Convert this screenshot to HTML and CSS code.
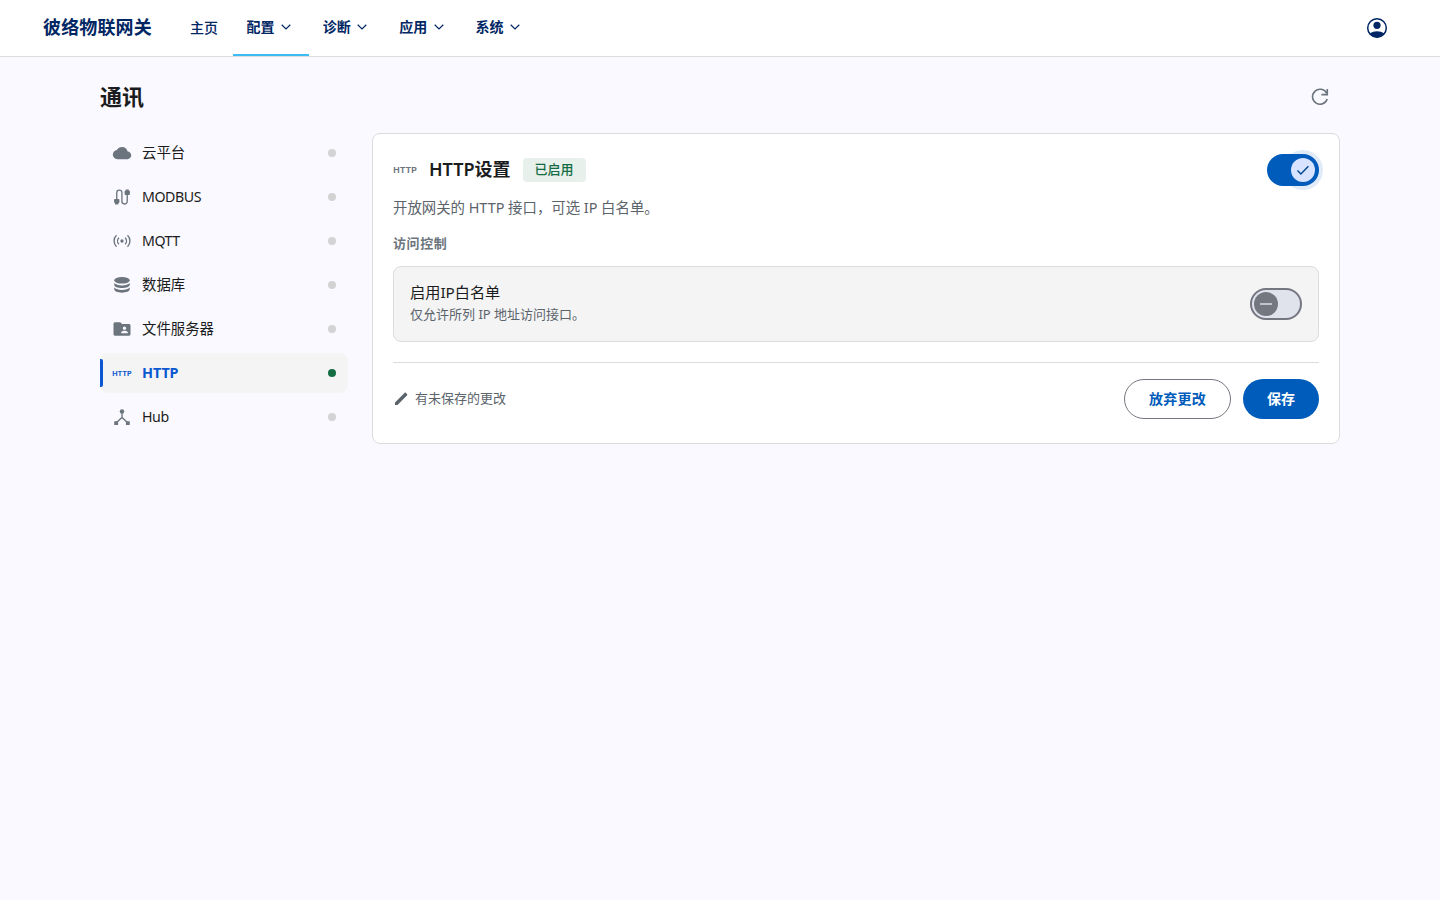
FILE: index.html
```html
<!DOCTYPE html>
<html lang="zh-CN">
<head>
    <meta charset="UTF-8">
    <meta name="viewport" content="width=device-width, initial-scale=1.0">
    <title>彼络物联网关</title>
    <link rel="stylesheet" href="styles.css">
</head>
<body>
    <header class="topbar">
        <a class="brand">彼络物联网关</a>
        <nav class="nav">
            <a class="nav-item home">主页</a>
            <a class="nav-item active">配置<svg class="chevron" viewBox="0 0 16 16"><path d="M3.700 5.700L8 9.900 12.300 5.700"/></svg></a>
            <a class="nav-item">诊断<svg class="chevron" viewBox="0 0 16 16"><path d="M3.700 5.700L8 9.900 12.300 5.700"/></svg></a>
            <a class="nav-item">应用<svg class="chevron" viewBox="0 0 16 16"><path d="M3.700 5.700L8 9.900 12.300 5.700"/></svg></a>
            <a class="nav-item">系统<svg class="chevron" viewBox="0 0 16 16"><path d="M3.700 5.700L8 9.900 12.300 5.700"/></svg></a>
        </nav>
        <button class="icon-btn account" aria-label="账户">
            <svg viewBox="0 0 24 24">
                <circle cx="12" cy="12" r="9.300" fill="none" stroke="currentColor" stroke-width="1.500"/>
                <circle cx="12" cy="9.300" r="3.600"/>
                <path d="M4.800 17.600C7 15.900 9.400 15.200 12 15.200s5 .7 7.200 2.400C17.500 20.200 15 21.500 12 21.500S6.500 20.200 4.800 17.600z"/>
            </svg>
        </button>
    </header>

    <main class="page">
        <div class="page-head">
            <h1>通讯</h1>
            <button class="icon-btn refresh" aria-label="刷新">
                <svg viewBox="0 0 24 24"><path d="M18.600 8.100A7.500 7.500 0 1 0 19.200 14M19.300 4v5.600h-5.900" fill="none" stroke="currentColor" stroke-width="1.600"/></svg>
            </button>
        </div>

        <div class="layout">
            <aside class="side">
                <a class="side-item">
                    <svg class="icon" viewBox="0 0 24 24"><path d="M19.350 10.040C18.670 6.590 15.640 4 12 4 9.110 4 6.600 5.640 5.350 8.040 2.340 8.360 0 10.910 0 14c0 3.310 2.690 6 6 6h13c2.760 0 5-2.240 5-5 0-2.640-2.050-4.780-4.650-4.960z" transform="translate(1 1) scale(.92)"/></svg>
                    <span>云平台</span><i class="dot"></i>
                </a>
                <a class="side-item latin">
                    <svg class="icon" viewBox="0 0 24 24">
                        <path d="M5.700 15V6.800a3.100 3.100 0 0 1 6.200 0v10.400a3.200 3.200 0 0 0 6.400 0V9" fill="none" stroke="currentColor" stroke-width="1.600"/>
                        <path d="M3.500 14.500h4.400a1 1 0 0 1 1 1v2.800L7.500 20.200V21H3.900v-.8l-1.400-1.900v-2.800a1 1 0 0 1 1-1zM16.500 3h3.600v.8l1.400 1.400v3.300a1 1 0 0 1-1 1h-4.400a1 1 0 0 1-1-1V5.200l1.400-1.400z"/>
                    </svg>
                    <span>MODBUS</span><i class="dot"></i>
                </a>
                <a class="side-item latin">
                    <svg class="icon" viewBox="0 0 24 24">
                        <circle cx="12" cy="12" r="2"/>
                        <path d="M8.300 16a5.700 5.700 0 0 1 0-8M15.700 8a5.700 5.700 0 0 1 0 8M5.400 18.800a9.400 9.400 0 0 1 0-13.600M18.600 5.200a9.400 9.400 0 0 1 0 13.600" fill="none" stroke="currentColor" stroke-width="1.650"/>
                    </svg>
                    <span>MQTT</span><i class="dot"></i>
                </a>
                <a class="side-item">
                    <svg class="icon" viewBox="0 0 24 24">
                        <ellipse cx="12" cy="6.400" rx="9.300" ry="3.900"/>
                        <path d="M2.700 9.600c1.600 1.900 5 2.900 9.300 2.900s7.700-1 9.300-2.900v2c0 2.300-4.200 4-9.300 4s-9.300-1.700-9.300-4zM2.700 15c1.600 1.900 5 2.900 9.300 2.900s7.700-1 9.300-2.900v2.200c0 2.300-4.200 4-9.300 4s-9.300-1.700-9.300-4z"/>
                    </svg>
                    <span>数据库</span><i class="dot"></i>
                </a>
                <a class="side-item">
                    <svg class="icon" viewBox="0 0 24 24"><path d="M20.500 6H12l-2-2H3.500C2.600 4 1.800 4.900 1.800 5.800V18.300c0 .9.800 1.700 1.700 1.700h17c.9 0 1.700-.8 1.700-1.700V7.700c0-.9-.8-1.700-1.700-1.700zM15 9c1.100 0 2 .9 2 2s-.9 2-2 2-2-.9-2-2 .9-2 2-2zm4 8h-8v-1c0-1.330 2.670-2 4-2s4 .67 4 2v1z"/></svg>
                    <span>文件服务器</span><i class="dot"></i>
                </a>
                <a class="side-item active">
                    <svg class="icon" viewBox="0 0 24 24"><text class="http-text" x="0.300" y="15" textLength="23.400" lengthAdjust="spacingAndGlyphs">HTTP</text></svg>
                    <span>HTTP</span><i class="dot on"></i>
                </a>
                <a class="side-item latin">
                    <svg class="icon" viewBox="0 0 24 24">
                        <path d="M12 6v7M4.500 19.500L12 12.500l7.500 7" fill="none" stroke="currentColor" stroke-width="1.600"/>
                        <path d="M2.700 17h4.600v4.600H2.700zM16.700 17h4.600v4.600h-4.600z"/>
                        <circle cx="12" cy="5.300" r="2.700"/>
                    </svg>
                    <span>Hub</span><i class="dot"></i>
                </a>
            </aside>

            <section class="card">
                <div class="card-head">
                    <svg class="icon icon-lg" viewBox="0 0 24 24"><text class="http-text" x="0.300" y="15" textLength="23.400" lengthAdjust="spacingAndGlyphs">HTTP</text></svg>
                    <h2>HTTP设置</h2>
                    <span class="badge">已启用</span>
                    <button class="switch on" aria-label="HTTP">
                        <span class="thumb"><svg viewBox="0 0 16 16"><path d="M2.500 8.500l3.400 3.400 7.500-7.600"/></svg></span>
                    </button>
                </div>
                <p class="desc">开放网关的 HTTP 接口，可选 IP 白名单。</p>
                <h3>访问控制</h3>
                <div class="setting">
                    <div class="setting-text">
                        <div class="setting-title">启用IP白名单</div>
                        <div class="setting-hint">仅允许所列 IP 地址访问接口。</div>
                    </div>
                    <button class="switch" aria-label="启用IP白名单">
                        <span class="thumb"><svg viewBox="0 0 16 16"><path d="M2 8h12"/></svg></span>
                    </button>
                </div>
                <div class="actions">
                    <svg class="pencil" viewBox="0 0 24 24"><path d="M3 21v-3.800L17.600 2.800c.5-.5 1.100-.5 1.600 0l2 2c.5.5.5 1.100 0 1.600L6.800 21z"/></svg>
                    <span class="unsaved">有未保存的更改</span>
                    <button class="btn btn-outline">放弃更改</button>
                    <button class="btn btn-primary">保存</button>
                </div>
            </section>
        </div>
    </main>
</body>
</html>
```
FILE: styles.css
```css
* {
    margin: 0;
    padding: 0;
    box-sizing: border-box;
}

body {
    font-family: "Noto Sans", "Noto Sans CJK SC", sans-serif;
    background-color: #faf9ff;
    color: #1a1c20;
    min-height: 100vh;
}

button {
    font-family: inherit;
    border: none;
    background: none;
    cursor: pointer;
}

svg {
    display: block;
    fill: currentColor;
    flex-shrink: 0;
}

.topbar {
    display: flex;
    align-items: stretch;
    height: 57px;
    padding: 0 51px 0 43px;
    background: #fff;
    border-bottom: 1px solid #dcdcdc;
    color: #002663;
}

.brand {
    font-size: 18px;
    font-weight: 700;
    letter-spacing: 0.150px;
    line-height: 55px;
    width: 134px;
}

.nav {
    display: flex;
    flex: 1;
}

.nav-item {
    display: flex;
    align-items: center;
    font-size: 14px;
    font-weight: 600;
    padding: 0 15px 0 13px;
    margin-right: 0.400px;
    line-height: 20px;
    border-bottom: 2px solid transparent;
}

.nav-item.home {
    font-weight: 500;
    padding-top: 2px;
}

.nav-item.active {
    border-bottom-color: #3dbbf5;
}

.chevron {
    width: 16px;
    height: 16px;
    margin: 0 0.500px 0 3.500px;
    fill: none;
    stroke: currentColor;
    stroke-width: 1.200;
}

.icon-btn {
    display: flex;
    align-items: center;
    justify-content: center;
}

.account {
    color: #002663;
}

.account svg {
    width: 24px;
    height: 24px;
}

.page {
    width: 1240px;
    margin: 0 auto;
    padding-top: 20px;
}

.page-head {
    display: flex;
    align-items: center;
    justify-content: space-between;
    height: 40px;
    margin-bottom: 16px;
}

.page-head h1 {
    font-size: 22px;
    font-weight: 600;
    line-height: 38px;
    padding-bottom: 2px;
}

.refresh {
    width: 40px;
    height: 40px;
    color: #6c757d;
}

.refresh svg {
    width: 24px;
    height: 24px;
}

.layout {
    display: flex;
    align-items: flex-start;
    gap: 24px;
}

.side {
    display: flex;
    flex-direction: column;
    gap: 4px;
    width: 248px;
}

.side-item {
    position: relative;
    display: flex;
    align-items: center;
    gap: 10px;
    height: 40px;
    padding: 0 12px;
    border-radius: 8px;
    font-size: 14.400px;
    line-height: 20px;
}

.side-item span {
    flex: 1;
}

.side-item.latin span {
    font-size: 14.200px;
    letter-spacing: -0.450px;
}

.side-item.active {
    background: #f4f4f4;
    color: #0b57d0;
    font-weight: 700;
}

.side-item.active::before {
    content: "";
    position: absolute;
    left: 0;
    top: 6px;
    width: 3px;
    height: 28px;
    border-radius: 0 2px 2px 0;
    background: #0b57d0;
}

.side-item.active span {
    letter-spacing: -0.100px;
}

.icon {
    width: 20px;
    height: 20px;
    color: #6c757d;
}

.side-item.active .icon {
    color: #0b57d0;
}

.icon-lg {
    width: 24px;
    height: 24px;
}

.http-text {
    font-family: "Inter", sans-serif;
    font-size: 8.200px;
    font-weight: 700;
}

.dot {
    width: 8px;
    height: 8px;
    border-radius: 50%;
    background: #d3d3d3;
}

.dot.on {
    background: #146c43;
}

.card {
    flex: 1;
    padding: 20px 20px 24px;
    background: #fff;
    border: 1px solid #dcdcdc;
    border-radius: 8px;
}

.card-head {
    display: flex;
    align-items: center;
    gap: 12px;
    height: 32px;
}

.card-head h2 {
    font-size: 18px;
    font-weight: 600;
    line-height: 28px;
    padding-bottom: 2px;
}

.badge {
    height: 24px;
    padding: 0 12px;
    border-radius: 4px;
    background: #e8f0ec;
    color: #146c43;
    font-size: 13px;
    font-weight: 500;
    line-height: 22px;
}

.switch {
    display: flex;
    align-items: center;
    flex-shrink: 0;
    width: 52px;
    height: 32px;
    padding: 0 2px;
    border: 2px solid #74777f;
    border-radius: 16px;
    background: #e0e2ec;
}

.switch.on {
    justify-content: flex-end;
    margin-left: auto;
    border-color: #005cbb;
    background: #005cbb;
}

.thumb {
    display: flex;
    align-items: center;
    justify-content: center;
    width: 24px;
    height: 24px;
    border-radius: 50%;
    background: #74777f;
    color: #e0e2ec;
}

.switch.on .thumb {
    background: #d7e3ff;
    color: #00458f;
    box-shadow: 0 0 0 8px rgba(0, 92, 187, 0.120);
}

.thumb svg {
    width: 16px;
    height: 16px;
    fill: none;
    stroke: currentColor;
    stroke-width: 1.400;
}

.desc {
    margin-top: 11px;
    font-size: 14.400px;
    line-height: 22px;
    color: #5b636b;
}

.card h3 {
    margin-top: 14px;
    font-size: 13px;
    font-weight: 600;
    line-height: 20px;
    letter-spacing: 0.600px;
    color: #6c757d;
}

.setting {
    display: flex;
    align-items: center;
    justify-content: space-between;
    height: 76px;
    margin-top: 13px;
    padding: 0 16px;
    background: #f4f4f4;
    border: 1px solid #dcdcdc;
    border-radius: 8px;
}

.setting-text {
    padding-bottom: 2px;
}

.setting-title {
    font-size: 15.200px;
    line-height: 22px;
}

.setting-hint {
    font-size: 13px;
    line-height: 22px;
    color: #5b636b;
}

.actions {
    display: flex;
    align-items: center;
    margin-top: 20px;
    padding-top: 16px;
    border-top: 1px solid #dcdcdc;
}

.pencil {
    width: 16px;
    height: 16px;
    margin-right: 6px;
    color: #5b636b;
}

.unsaved {
    flex: 1;
    font-size: 13px;
    line-height: 20px;
    padding-bottom: 2px;
    color: #5b636b;
}

.btn {
    height: 40px;
    padding: 0 24px 2px;
    border-radius: 20px;
    font-size: 14px;
    font-weight: 600;
    white-space: nowrap;
}

.btn-outline {
    width: 107px;
    margin-right: 12px;
    letter-spacing: 0.200px;
    border: 1px solid #74777f;
    color: #005cbb;
}

.btn-primary {
    background: #005cbb;
    color: #fff;
}
```
